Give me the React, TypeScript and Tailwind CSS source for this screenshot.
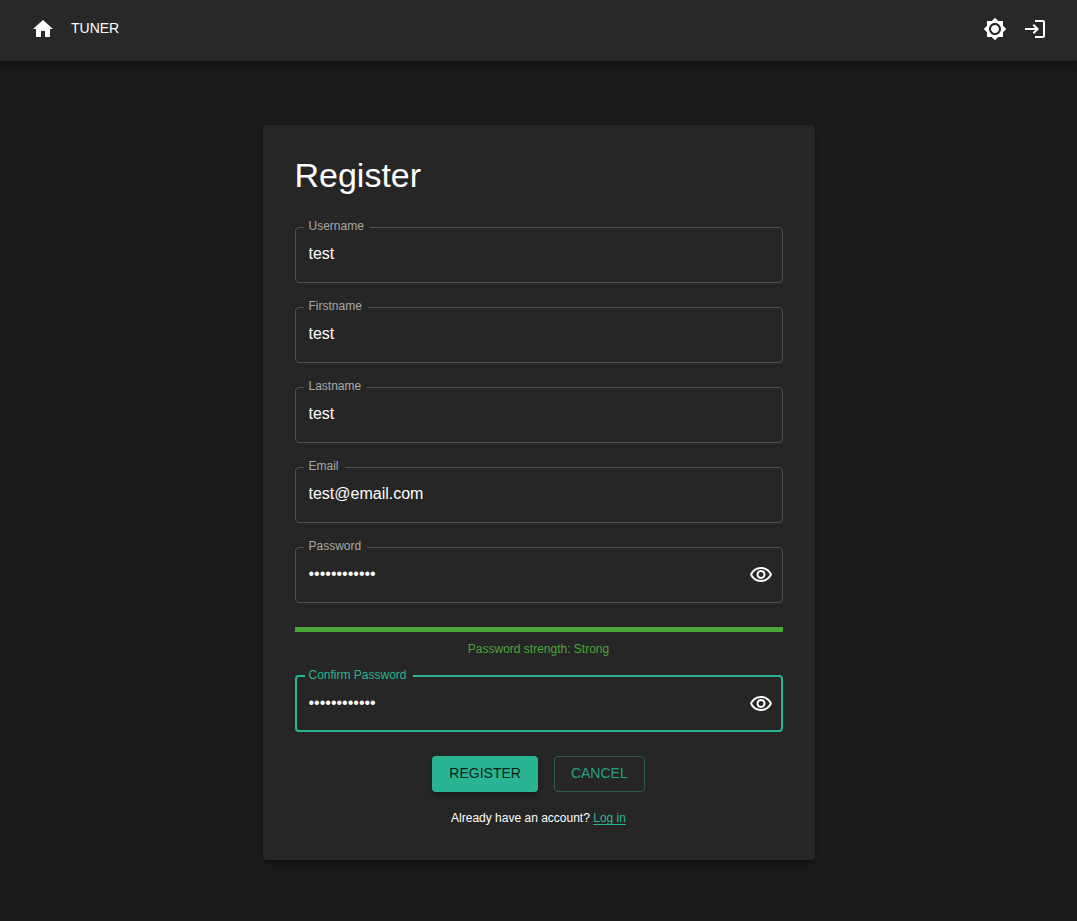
import { useState } from "react";

const ICONS = {
  home: "M10 20v-6h4v6h5v-8h3L12 3 2 12h3v8z",
  brightness:
    "M20 8.69V4h-4.69L12 .69 8.69 4H4v4.69L.69 12 4 15.31V20h4.69L12 23.31 15.31 20H20v-4.69L23.31 12 20 8.69zM12 18c-3.31 0-6-2.69-6-6s2.69-6 6-6 6 2.69 6 6-2.69 6-6 6zm0-10c-2.21 0-4 1.79-4 4s1.79 4 4 4 4-1.79 4-4-1.79-4-4-4z",
  login:
    "M11 7 9.6 8.4l2.6 2.6H2v2h10.2l-2.6 2.6L11 17l5-5-5-5zm9 12h-8v2h8c1.1 0 2-.9 2-2V5c0-1.1-.9-2-2-2h-8v2h8v14z",
  eye: "M12 6c3.79 0 7.17 2.13 8.82 5.5C19.17 14.87 15.79 17 12 17s-7.17-2.13-8.82-5.5C4.83 8.13 8.21 6 12 6m0-2C7 4 2.73 7.11 1 11.5 2.73 15.89 7 19 12 19s9.27-3.11 11-7.5C21.27 7.11 17 4 12 4zm0 5c1.38 0 2.5 1.12 2.5 2.5S13.38 14 12 14s-2.5-1.12-2.5-2.5S10.62 9 12 9m0-2c-2.48 0-4.5 2.02-4.5 4.5S9.52 16 12 16s4.5-2.02 4.5-4.5S14.48 7 12 7z",
};

function Icon({ name }: { name: keyof typeof ICONS }) {
  return (
    <svg className="size-6 fill-current" viewBox="0 0 24 24" aria-hidden="true">
      <path d={ICONS[name]} />
    </svg>
  );
}

type FieldProps = {
  id: string;
  label: string;
  initial: string;
  type?: "text" | "email" | "password";
  active?: boolean;
};

function Field({ id, label, initial, type = "text", active = false }: FieldProps) {
  const [value, setValue] = useState(initial);
  const [visible, setVisible] = useState(false);
  const secret = type === "password";

  return (
    <fieldset
      className={
        active
          ? "min-w-0 rounded border-2 border-[#29b594] px-2"
          : "min-w-0 rounded border border-[#515151] pr-[9px] pl-2"
      }
    >
      <legend
        className={
          active
            ? "pr-1.5 pb-0.5 pl-1 text-xs leading-[18px] text-[#29b594]"
            : "pr-1.5 pb-0.5 pl-[5px] text-xs leading-[18px] text-[#a8a8a8]"
        }
      >
        <label htmlFor={id}>{label}</label>
      </legend>
      <div className={active ? "flex h-11 items-start" : "flex h-[45px] items-start"}>
        <input
          id={id}
          type={secret && visible ? "text" : type}
          value={value}
          onChange={(e) => setValue(e.target.value)}
          className={
            active
              ? "mt-[5px] h-6 min-w-0 flex-1 bg-transparent pl-1 text-base text-white outline-none"
              : "mt-[5px] h-6 min-w-0 flex-1 bg-transparent pl-[5px] text-base text-white outline-none"
          }
        />
        {secret && (
          <button
            type="button"
            aria-label="Toggle password visibility"
            onClick={() => setVisible(!visible)}
            className="mt-1.5 text-white"
          >
            <Icon name="eye" />
          </button>
        )}
      </div>
    </fieldset>
  );
}

export default function App() {
  return (
    <div className="min-h-screen bg-[#1a1a1a] font-['Liberation_Sans',Arial,sans-serif] text-white">
      <header className="flex h-[61px] items-center justify-between bg-[#282828] pr-[30px] pb-[3px] pl-[31px] shadow-md shadow-black/25">
        <nav className="flex items-center gap-4">
          <a href="#home" aria-label="Home">
            <Icon name="home" />
          </a>
          <a href="#tuner" className="pb-0.5 text-sm leading-5">
            TUNER
          </a>
        </nav>
        <div className="flex items-center gap-4">
          <button type="button" aria-label="Toggle theme">
            <Icon name="brightness" />
          </button>
          <a href="#login" aria-label="Log in">
            <Icon name="login" />
          </a>
        </div>
      </header>

      <main className="px-4 py-16">
        <form
          className="mx-auto max-w-[552px] rounded bg-[#262626] px-8 pt-[30px] pb-8 shadow-md shadow-black/25"
          onSubmit={(e) => e.preventDefault()}
        >
          <h1 className="text-[34px] leading-10">Register</h1>

          <div className="mt-[22px] flex flex-col gap-3.5">
            <Field id="username" label="Username" initial="test" />
            <Field id="firstname" label="Firstname" initial="test" />
            <Field id="lastname" label="Lastname" initial="test" />
            <Field id="email" label="Email" type="email" initial="test@email.com" />
            <Field id="password" label="Password" type="password" initial="abcdefghij12" />
          </div>

          <div className="mt-6 h-[5px] bg-[#4aa53a]" />
          <p className="mt-2 text-center text-xs leading-[18px] text-[#4aa53a]">
            Password strength: Strong
          </p>

          <div className="mt-2">
            <Field
              id="confirm"
              label="Confirm Password"
              type="password"
              initial="abcdefghij12"
              active
            />
          </div>

          <div className="mt-6 flex justify-center gap-4">
            <button
              type="submit"
              className="h-9 rounded bg-[#29b594] px-[17px] pb-0.5 text-sm text-[#071f19] shadow-md shadow-black/25"
            >
              REGISTER
            </button>
            <button
              type="button"
              className="h-9 rounded border border-[#275e51] px-4 pb-0.5 text-sm text-[#29a084]"
            >
              CANCEL
            </button>
          </div>

          <p className="mt-4 text-center text-xs leading-5">
            Already have an account?{" "}
            <a href="#login" className="text-[#29b594] underline underline-offset-2">
              Log in
            </a>
          </p>
        </form>
      </main>
    </div>
  );
}
